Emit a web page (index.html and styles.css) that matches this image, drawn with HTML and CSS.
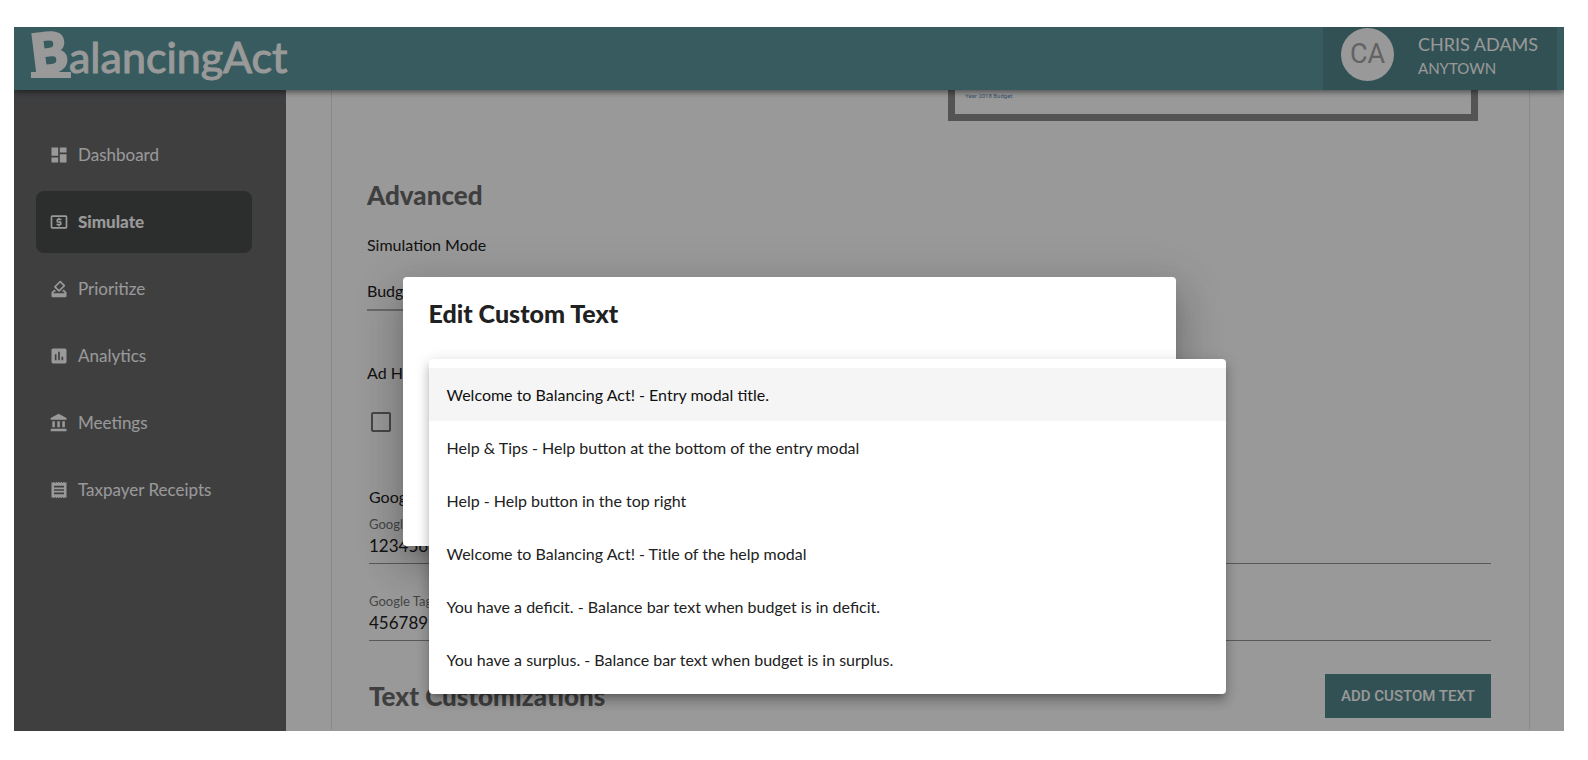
FILE: index.html
```html
<!DOCTYPE html>
<html lang="en">
<head>
<meta charset="utf-8">
<meta name="viewport" content="width=device-width, initial-scale=1.0">
<title>Balancing Act</title>
<link rel="stylesheet" href="styles.css">
</head>
<body>
<div class="app">

	<header class="topbar">
		<a class="logo" href="#"><span class="logo_mark"><span class="logo_b">B</span></span><span class="logo_text">alancingAct</span></a>
		<div class="user">
			<div class="avatar">CA</div>
			<div class="user_info">
				<div class="user_name">CHRIS ADAMS</div>
				<div class="user_org">ANYTOWN</div>
			</div>
		</div>
	</header>

	<div class="page">
		<nav class="sidebar">
			<a class="nav_item" href="#">
				<svg class="icon" viewBox="0 0 24 24"><path d="M3 13h8V3H3v10zm0 8h8v-6H3v6zm10 0h8V11h-8v10zm0-18v6h8V3h-8z"/></svg>
				Dashboard
			</a>
			<a class="nav_item active" href="#">
				<svg class="icon" viewBox="0 0 24 24"><path d="M11 17h2v-1h1c.55 0 1-.45 1-1v-3c0-.55-.45-1-1-1h-3v-1h4V8h-2V7h-2v1h-1c-.55 0-1 .45-1 1v3c0 .55.45 1 1 1h3v1H9v2h2v1zm9-13H4c-1.110 0-2 .89-2 2v12c0 1.110.89 2 2 2h16c1.110 0 2-.89 2-2V6c0-1.110-.89-2-2-2zm0 14H4V6h16v12z"/></svg>
				Simulate
			</a>
			<a class="nav_item" href="#">
				<svg class="icon" viewBox="0 0 24 24"><path d="M18 13h-.68l-2 2h1.910L19 17H5l1.780-2h2.050l-2-2H6l-3 3v4c0 1.100.89 2 1.990 2H19c1.100 0 2-.89 2-2v-4l-3-3zm-1-5.050l-4.950 4.950-3.540-3.540 4.950-4.950L17 7.950zm-4.240-5.660L6.390 8.660c-.39.39-.39 1.020 0 1.410l4.950 4.950c.39.39 1.020.39 1.410 0l6.360-6.360c.39-.39.39-1.020 0-1.410L14.160 2.300c-.38-.4-1.010-.4-1.400-.01z"/></svg>
				Prioritize
			</a>
			<a class="nav_item" href="#">
				<svg class="icon" viewBox="0 0 24 24"><path d="M19 3H5c-1.100 0-2 .9-2 2v14c0 1.100.9 2 2 2h14c1.100 0 2-.9 2-2V5c0-1.100-.9-2-2-2zM9 17H7v-7h2v7zm4 0h-2V7h2v10zm4 0h-2v-4h2v4z"/></svg>
				Analytics
			</a>
			<a class="nav_item" href="#">
				<svg class="icon" viewBox="0 0 24 24"><path d="M4 10v7h3v-7H4zm6 0v7h3v-7h-3zM2 22h19v-3H2v3zm14-12v7h3v-7h-3zm-4.500-9L2 6v2h19V6l-9.500-5z"/></svg>
				Meetings
			</a>
			<a class="nav_item" href="#">
				<svg class="icon" viewBox="0 0 24 24"><path d="M18 17H6v-2h12v2zm0-4H6v-2h12v2zm0-4H6V7h12v2zM3 22l1.500-1.500L6 22l1.500-1.500L9 22l1.500-1.500L12 22l1.500-1.500L15 22l1.500-1.500L18 22l1.500-1.500L21 22V2l-1.500 1.500L18 2l-1.500 1.500L15 2l-1.500 1.500L12 2l-1.500 1.500L9 2 7.500 3.500 6 2 4.500 3.500 3 2v20z"/></svg>
				Taxpayer Receipts
			</a>
		</nav>

		<main class="content">
			<div class="card">
				<div class="preview">Year 2018 Budget.</div>

				<h2 class="heading advanced">Advanced</h2>
				<label class="label" for="mode">Simulation Mode</label>
				<select class="mode" id="mode"><option>Budget</option></select>

				<label class="label adhoc" for="adhoc">Ad Hoc</label>
				<input class="check" type="checkbox" id="adhoc">

				<div class="google">
					<div class="label">Google</div>
					<label class="small_label" for="analytics">Google Analytics</label>
					<input class="field" type="text" id="analytics" value="123456">
					<label class="small_label second" for="tag">Google Tag Manager</label>
					<input class="field" type="text" id="tag" value="456789">

					<div class="custom_row">
						<h2 class="heading">Text Customizations</h2>
						<button class="button" type="button">ADD CUSTOM TEXT</button>
					</div>
				</div>
			</div>
		</main>
	</div>

	<!-- dialog with its open drop-down -->
	<div class="backdrop">
		<div class="modal" role="dialog" aria-labelledby="modal_title">
			<h2 class="modal_title" id="modal_title">Edit Custom Text</h2>
			<select class="menu" size="6" aria-label="Custom text">
				<option selected>Welcome to Balancing Act! - Entry modal title.</option>
				<option>Help &amp; Tips - Help button at the bottom of the entry modal</option>
				<option>Help - Help button in the top right</option>
				<option>Welcome to Balancing Act! - Title of the help modal</option>
				<option>You have a deficit. - Balance bar text when budget is in deficit.</option>
				<option>You have a surplus. - Balance bar text when budget is in surplus.</option>
			</select>
		</div>
	</div>

</div>
</body>
</html>
```
FILE: styles.css
```css
* {
	box-sizing: border-box;
}
body {
	margin: 0;
	padding: 27px 24px 29px 14px;
	height: 100vh;
	background-color: white;
	color: #212121;
	font-family: Lato, "Liberation Sans", sans-serif;
	font-size: 16px;
	line-height: 24px;
}
h2 {
	margin: 0;
}
.app {
	position: relative;
	display: flex;
	flex-direction: column;
	height: 100%;
	overflow: hidden;
}

/* top bar */
.topbar {
	display: flex;
	flex-shrink: 0;
	justify-content: space-between;
	height: 63px;
	padding-left: 17px;
	padding-right: 7px;
	background-color: #5c989d;
	color: white;
	box-shadow: 0 2px 6px rgba(0,0,0,0.5);
	z-index: 1;
}
.logo {
	display: flex;
	color: white;
	text-decoration: none;
	line-height: 60px;
}
.logo_mark {
	width: 40px;
	height: 51px;
	border-bottom: 6px solid white;
	line-height: 50px;
}
.logo_b {
	display: block;
	width: 36px;
	font-size: 54px;
	font-weight: 900;
	text-align: center;
	transform: rotate(-7deg);
	-webkit-text-stroke: 3px white;
}
.logo_text {
	margin-left: -2px;
	font-size: 43px;
	-webkit-text-stroke: 1px white;
}
.user {
	display: flex;
	gap: 24px;
	width: 234px;
	padding: 1px 18px;
	background-color: #53878c;
}
.avatar {
	width: 53px;
	height: 53px;
	border-radius: 50%;
	background-color: white;
	color: #a5a5a5;
	font-family: Roboto, sans-serif;
	font-size: 27px;
	line-height: 53px;
	text-align: center;
}
.user_info {
	padding-top: 4px;
	white-space: nowrap;
}
.user_name {
	font-size: 18px;
}
.user_org {
	font-size: 15px;
}

/* left navigation */
.page {
	display: flex;
	flex: 1;
	min-height: 0;
}
.sidebar {
	display: flex;
	flex-direction: column;
	gap: 5px;
	width: 272px;
	flex-shrink: 0;
	padding: 34px 34px 0 22px;
	background-color: #696a6c;
}
.nav_item {
	display: flex;
	align-items: center;
	gap: 9px;
	height: 62px;
	padding-left: 13px;
	border-radius: 8px;
	color: white;
	font-size: 17px;
	text-decoration: none;
}
.nav_item.active {
	background-color: #4a4d4b;
	font-weight: 900;
}
.icon {
	width: 20px;
	height: 20px;
	fill: white;
}

/* page content */
.content {
	flex: 1;
	padding: 0 34px 0 45px;
	overflow: hidden;
	background-color: white;
}
.card {
	display: flex;
	flex-direction: column;
	padding: 0 38px 12px 35px;
	border-left: 1px solid #e4e4e4;
	border-right: 1px solid #e4e4e4;
}
.preview {
	align-self: flex-end;
	width: 530px;
	height: 31px;
	margin-right: 13px;
	padding-left: 10px;
	border: 7px solid #8d8d8d;
	border-top: 0;
	color: #5f8db8;
	font-family: Roboto, sans-serif;
	font-size: 6px;
	line-height: 12px;
}
.heading {
	color: #696a6c;
	font-size: 26px;
	font-weight: 900;
	line-height: 32px;
}
.advanced {
	margin-top: 58px;
	margin-bottom: 22px;
}
.label {
	display: block;
}
.mode {
	width: 300px;
	height: 36px;
	margin-top: 18px;
	padding: 0 0 2px;
	border: 0;
	border-bottom: 2px solid #b0b0b0;
	border-radius: 0;
	background: none;
	color: inherit;
	font: inherit;
	appearance: none;
}
.adhoc {
	margin-top: 50px;
}
.check {
	width: 20px;
	height: 20px;
	margin: 27px 0 0 4px;
	border: 2px solid #757575;
	border-radius: 2px;
	appearance: none;
}
.google {
	margin-top: 53px;
	padding-left: 2px;
}
.small_label {
	display: block;
	margin-top: 6px;
	color: #757575;
	font-size: 13px;
	line-height: 18px;
}
.small_label.second {
	margin-top: 28px;
}
.field {
	display: block;
	width: 100%;
	height: 31px;
	padding: 0 0 6px;
	border: 0;
	border-bottom: 1px solid #949494;
	background: none;
	color: inherit;
	font: inherit;
	font-size: 17px;
}
.custom_row {
	display: flex;
	align-items: center;
	justify-content: space-between;
	margin-top: 33px;
}
.button {
	height: 44px;
	padding: 0 16px;
	border: 0;
	background-color: #53878c;
	color: white;
	font-family: Roboto, sans-serif;
	font-size: 15px;
	font-weight: 500;
}

/* dialog */
.backdrop {
	position: absolute;
	top: 0;
	right: 0;
	bottom: 0;
	left: 0;
	display: flex;
	align-items: center;
	justify-content: center;
	padding-top: 65px;
	background-color: rgba(0,0,0,0.4);
	z-index: 2;
}
.modal {
	position: relative;
	width: calc(50% - 2px);
	height: 269px;
	padding: 20px 26px;
	border-radius: 4px;
	background-color: white;
	box-shadow: 0 11px 15px -7px rgba(0,0,0,0.2), 0 24px 38px 3px rgba(0,0,0,0.14), 0 9px 46px 8px rgba(0,0,0,0.12);
}
.modal_title {
	font-size: 25px;
	font-weight: 900;
	line-height: 32px;
}
.menu {
	position: absolute;
	top: 82px;
	left: 26px;
	width: calc(100% + 24px);
	height: 335px;
	padding: 9px 0 8px;
	border: 0;
	border-radius: 4px;
	outline: none;
	overflow: hidden;
	background-color: white;
	color: inherit;
	font: inherit;
	box-shadow: 0 5px 5px -3px rgba(0,0,0,0.2), 0 8px 10px 1px rgba(0,0,0,0.14), 0 3px 14px 2px rgba(0,0,0,0.12);
}
.menu option {
	height: 53px;
	padding: 17px 18px;
}
.menu option:checked {
	background: linear-gradient(#f5f5f5, #f5f5f5);
}
```
